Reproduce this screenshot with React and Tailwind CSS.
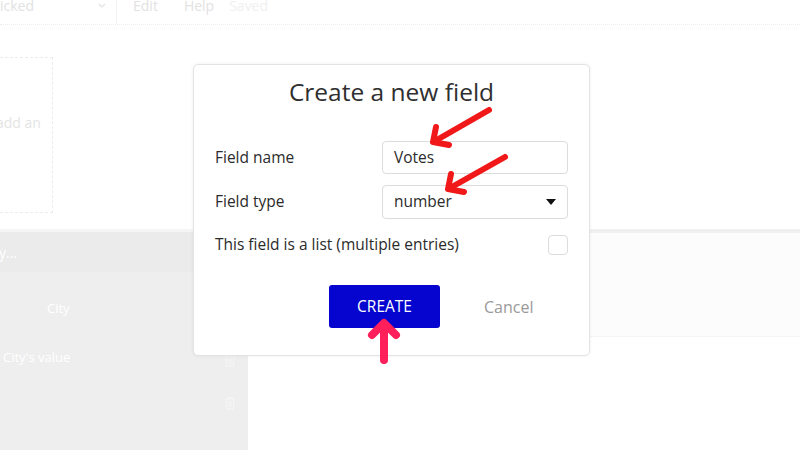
import React from "react";

function Trash({ className }) {
  return (
    <svg className={className} width="12" height="14" viewBox="0 0 12 14" fill="none" stroke="currentColor" strokeWidth="1.2">
      <path d="M1 3h10M4 3V1.5h4V3M2 3l.7 10h6.6L10 3M5 5.5v5.5M7 5.5v5.5" />
    </svg>
  );
}

export default function App() {
  return (
    <div className="relative w-[800px] h-[450px] overflow-hidden bg-white" style={{ fontFamily: '"Open Sans", "Noto Sans", sans-serif' }}>
      {/* top bar */}
      <div className="flex h-[25px] items-start border-b border-dotted border-[#ededed] text-[14px] leading-[18px] text-[#e2e2e2]">
        <div className="flex w-[117px] items-start justify-between pr-[10px] border-r border-[#f2f2f2] h-full">
          <span className="-mt-[3px]">icked</span>
          <svg className="mt-[3px]" width="8" height="6" viewBox="0 0 8 6"><path d="M1 1l3 3 3-3" stroke="#e6e6e6" strokeWidth="1.5" fill="none" /></svg>
        </div>
        <span className="ml-[16px] -mt-[3px]">Edit</span>
        <span className="ml-[26px] -mt-[3px]">Help</span>
        <span className="ml-[15px] -mt-[3px] text-[#f0f0f0]">Saved</span>
      </div>

      {/* upper canvas */}
      <div className="h-[204px] pt-[32px]">
        <div className="-ml-[10px] w-[63px] h-[156px] border border-dashed border-[#ececec] flex items-center pl-[5px] pb-[26px] text-[14px] text-[#e4e4e4] whitespace-nowrap">
          add an
        </div>
      </div>

      {/* lower area */}
      <div className="flex h-[221px]">
        <div className="w-[248px] bg-[#eeeeee] flex flex-col text-[13px] text-white">
          <div className="h-[43px] bg-[#ebebeb] border-t-[3px] border-[#f5f5f5] flex items-center -ml-[6px] text-[14px]">
            <span>ty...</span>
          </div>
          <div className="h-[66px] flex items-center pl-[47px] pt-[7px]">City</div>
          <div className="h-[40px] flex items-center justify-between pl-[3px] pr-[12px]">
            <span>City's value</span>
            <Trash className="text-[#f5f5f5] mt-[4px]" />
          </div>
          <div className="h-[50px] flex items-center justify-end pr-[12px]">
            <Trash className="text-[#f5f5f5]" />
          </div>
        </div>
        <div className="flex-1 flex flex-col">
          <div className="h-[4px] bg-[#f0f0f0]" />
          <div className="h-[104px] bg-[#fcfcfc] border-b border-dotted border-[#eeeeee]" />
        </div>
      </div>

      {/* modal */}
      <div className="absolute left-[193px] top-[64px] w-[397px] h-[292px] bg-white border border-[#e3e3e3] rounded-[5px] shadow-[0_0_4px_rgba(0,0,0,0.06)] text-[#2b2b2b]">
        <div className="text-center text-[24.5px] leading-[34px] mt-[10px] text-[#2f2f2f]">Create a new field</div>
        <div className="px-[21px] mt-[32px] text-[15.5px]">
          <div className="flex items-center justify-between h-[33px]">
            <span>Field name</span>
            <div className="w-[186px] h-[33px] border border-[#dcdcdc] rounded-[4px] flex items-center pl-[11px]">Votes</div>
          </div>
          <div className="flex items-center justify-between h-[34px] mt-[11px]">
            <span>Field type</span>
            <div className="w-[186px] h-[34px] border border-[#dcdcdc] rounded-[4px] flex items-center justify-between pl-[11px] pr-[11px]">
              <span>number</span>
              <svg width="10" height="6" viewBox="0 0 10 6"><path d="M0 0h10L5 6z" fill="#111" /></svg>
            </div>
          </div>
          <div className="flex items-center justify-between h-[22px] mt-[15px]">
            <span>This field is a list (multiple entries)</span>
            <div className="w-[20px] h-[20px] border border-[#dcdcdc] rounded-[4px]" />
          </div>
          <div className="flex items-center mt-[29px]">
            <div className="ml-[114px] w-[111px] h-[43px] bg-[#0505cf] rounded-[3px] flex items-center justify-center text-white text-[15.5px]">CREATE</div>
            <span className="ml-[44px] text-[#9a9a9a] text-[16px]">Cancel</span>
          </div>
        </div>
      </div>

      {/* annotation arrows */}
      <svg className="absolute left-0 top-0 pointer-events-none" width="800" height="450" viewBox="0 0 800 450">
        <g stroke="#f01818" strokeWidth="6" strokeLinecap="round" strokeLinejoin="round" fill="none">
          <path d="M489 110L435 141" />
          <path d="M436 127L433 142L449 145" />
          <path d="M505 157L450 188" />
          <path d="M451 174L448 189L464 192" />
        </g>
        <g stroke="#ff1f5a" strokeWidth="8" strokeLinecap="round" strokeLinejoin="round" fill="none">
          <path d="M384 325V360" />
          <path d="M372 335L384 323L396 335" />
        </g>
      </svg>
    </div>
  );
}
